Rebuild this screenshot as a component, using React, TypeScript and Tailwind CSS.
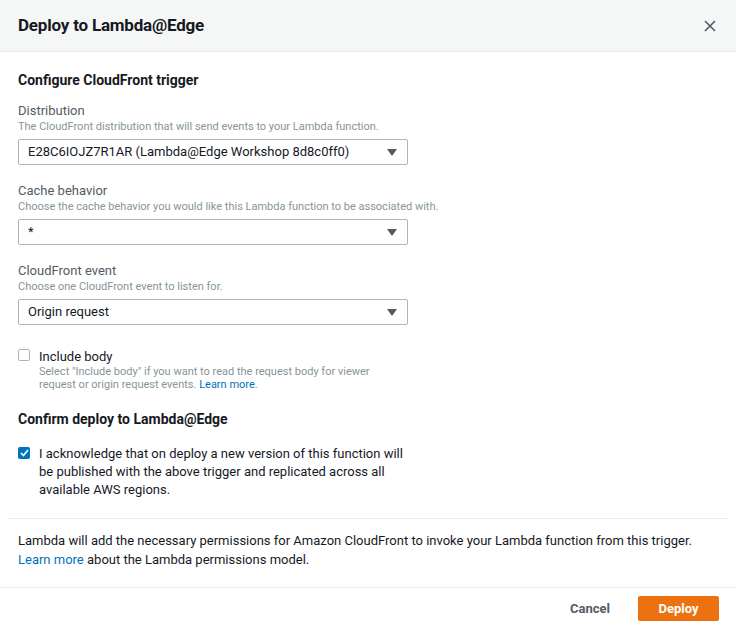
import React from "react";

const FONT = "font-['Roboto','Liberation_Sans',sans-serif]";

const Caret = () => (
  <svg width="10" height="7" viewBox="0 0 10 7" className="shrink-0">
    <path d="M0 0 H10 L5 7 Z" fill="#545b64" />
  </svg>
);

interface SelectProps {
  value: string;
}

const FakeSelect: React.FC<SelectProps> = ({ value }) => (
  <div className="flex h-[26px] w-[390px] items-center justify-between rounded-[2px] border border-[#aab7b8] bg-white pl-[9px] pr-[10px] text-[13px] text-[#16191f]">
    <span>{value}</span>
    <Caret />
  </div>
);

interface FieldProps {
  label: string;
  description: string;
  value: string;
}

const Field: React.FC<FieldProps> = ({ label, description, value }) => (
  <div className="flex flex-col">
    <span className="text-[13px] leading-[18px] text-[#545b64]">{label}</span>
    <span className="text-[11px] leading-[14px] text-[#879596]">{description}</span>
    <div className="mt-[5px]">
      <FakeSelect value={value} />
    </div>
  </div>
);

export default function App() {
  return (
    <div className={`h-[631px] w-[736px] overflow-hidden bg-white ${FONT} text-[#16191f]`}>
      <div className="flex h-[52px] items-center justify-between border-b border-[#eaeded] bg-[#f5f6f6] pl-[18px] pr-[20px]">
        <h1 className="text-[17px] font-bold tracking-[-0.2px]">Deploy to Lambda@Edge</h1>
        <svg width="12" height="12" viewBox="0 0 12 12">
          <path d="M1 1 L11 11 M11 1 L1 11" stroke="#545b64" strokeWidth="1.6" />
        </svg>
      </div>

      <div className="px-[18px] pt-[19px]">
        <h2 className="text-[14px] font-bold leading-[18px]">Configure CloudFront trigger</h2>

        <div className="mt-[13px] flex flex-col gap-[17px]">
          <Field
            label="Distribution"
            description="The CloudFront distribution that will send events to your Lambda function."
            value="E28C6IOJZ7R1AR (Lambda@Edge Workshop 8d8c0ff0)"
          />
          <Field
            label="Cache behavior"
            description="Choose the cache behavior you would like this Lambda function to be associated with."
            value="*"
          />
          <Field
            label="CloudFront event"
            description="Choose one CloudFront event to listen for."
            value="Origin request"
          />
        </div>

        <div className="mt-[23px] flex gap-[9px]">
          <div className="mt-[1px] h-[12px] w-[12px] rounded-[2px] border border-[#aab7b8] bg-white" />
          <div className="flex flex-col">
            <span className="text-[13px] leading-[17px] text-[#16191f]">Include body</span>
            <span className="w-[345px] text-[11px] leading-[13px] text-[#879596]">
              Select "Include body" if you want to read the request body for viewer request or origin
              request events. <span className="text-[#0073bb]">Learn more</span>.
            </span>
          </div>
        </div>

        <h2 className="mt-[19px] text-[14px] font-bold leading-[18px]">Confirm deploy to Lambda@Edge</h2>

        <div className="mt-[17px] flex gap-[9px]">
          <div className="mt-[2px] flex h-[12px] w-[12px] items-center justify-center rounded-[2px] bg-[#0073bb]">
            <svg width="9" height="8" viewBox="0 0 9 8">
              <path d="M1 4 L3.5 6.5 L8 1" stroke="white" strokeWidth="1.6" fill="none" />
            </svg>
          </div>
          <p className="w-[370px] text-[13px] leading-[18px] text-[#16191f]">
            I acknowledge that on deploy a new version of this function will be published with the above
            trigger and replicated across all available AWS regions.
          </p>
        </div>
      </div>

      <div className="mx-[8px] mt-[19px] border-t border-[#eaeded]" />

      <div className="px-[18px] pb-[18px] pt-[12px] text-[13px] leading-[19px] text-[#16191f]">
        <p>
          Lambda will add the necessary permissions for Amazon CloudFront to invoke your Lambda function from this
          trigger.
        </p>
        <p>
          <span className="text-[#0073bb]">Learn more</span> about the Lambda permissions model.
        </p>
      </div>

      <div className="flex items-center justify-end gap-[28px] border-t border-[#eaeded] pr-[17px] pt-[8px]">
        <span className="text-[13px] font-bold text-[#545b64]">Cancel</span>
        <div className="flex h-[25px] w-[81px] items-center justify-center rounded-[2px] bg-[#ec7211] text-[13px] font-bold text-white">
          Deploy
        </div>
      </div>
    </div>
  );
}
